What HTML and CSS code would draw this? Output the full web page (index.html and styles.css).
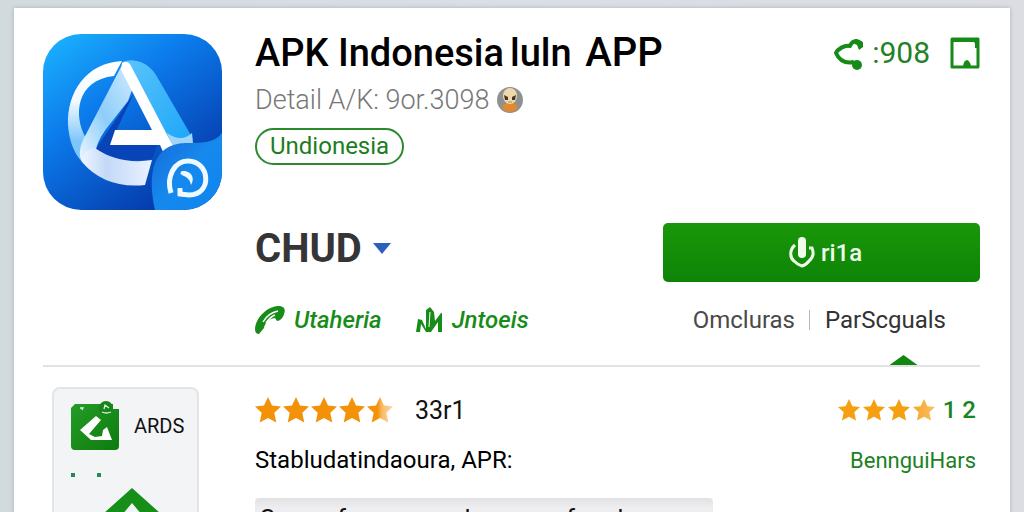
FILE: index.html
```html
<!DOCTYPE html>
<html lang="id">
<head>
<meta charset="utf-8">
<meta name="viewport" content="width=device-width, initial-scale=1">
<title>APK Indonesia</title>
<link rel="stylesheet" href="styles.css">
</head>
<body>
<svg class="defs" width="0" height="0" aria-hidden="true">
  <defs>
    <linearGradient id="fade"><stop offset=".4" stop-color="#f39208"/><stop offset=".6" stop-color="#f9bd6c"/><stop offset="1" stop-color="#fbd7a4"/></linearGradient>
    <linearGradient id="fade2"><stop offset="0" stop-color="#f5a524"/><stop offset="1" stop-color="#f9c069"/></linearGradient>
    <symbol id="star" viewBox="0 0 26 26"><path d="M13 0l4 8.600 9 .9-6.700 6.300 2 9.700L13 21l-8.300 4.500 2-9.700L0 9.500l9-.9z"/></symbol>
  </defs>
</svg>
<main class="page">
  <header class="app">
    <svg class="app-icon" viewBox="0 0 179 176" role="img" aria-label="APK Indonesia">
      <defs>
        <linearGradient id="bg" x1="0" y1="0" x2=".75" y2="1"><stop offset="0" stop-color="#1cb6ff"/><stop offset=".4" stop-color="#0c7cec"/><stop offset="1" stop-color="#0433a4"/></linearGradient>
        <linearGradient id="ring" x1="0" y1="0" x2="0" y2="1"><stop offset="0" stop-color="#fff"/><stop offset=".4" stop-color="#f2f9ff"/><stop offset=".8" stop-color="#7cc6fa"/></linearGradient>
        <linearGradient id="leg" x1="1" y1="0" x2="0" y2="1"><stop offset="0" stop-color="#d3ecff"/><stop offset=".55" stop-color="#8dcefa"/><stop offset="1" stop-color="#eef7ff"/></linearGradient>
        <linearGradient id="side" x1="0" y1="0" x2="1" y2="1"><stop offset="0" stop-color="#5bc5fa"/><stop offset="1" stop-color="#1ba5fa"/></linearGradient>
        <linearGradient id="base"><stop offset="0" stop-color="#eef5ff"/><stop offset=".35" stop-color="#c3d9f8"/><stop offset="1" stop-color="#eaf2ff"/></linearGradient>
        <linearGradient id="corner" x1="0" y1="0" x2="1" y2="1"><stop offset="0" stop-color="#1767d7"/><stop offset=".5" stop-color="#1689ed"/><stop offset="1" stop-color="#0d84f0"/></linearGradient>
        <clipPath id="tile"><rect width="179" height="176" rx="38"/></clipPath>
      </defs>
      <g clip-path="url(#tile)">
        <rect width="179" height="176" fill="url(#bg)"/>
        <path d="M91 59L52 116q22 14 57 9l6-16-48 1z" fill="#0844b8"/>
        <path d="M79 27C43 29 24 58 25 91c1 14 5 27 14 37l4-24C30 82 33 46 71 42z" fill="url(#ring)"/>
        <path d="M79 29c5-5 24-4 34 12l36 62c4 8-18 12-25 1z" fill="url(#side)"/>
        <path d="M124 99q14 10 25 0l1 10q-12 0-20 5z" fill="#9fd5fb"/>
        <path d="M80 29L40 106q-6 13-1 22l14-13q3-12 14-25l18-23 7-19z" fill="url(#leg)"/>
        <path d="M39 128q3-14 13-14 24 17 57 12l-7 25Q62 155 39 128z" fill="url(#base)"/>
        <path d="M79 29q4-3 8 1l44 84-10 6-4-9H67l5-15h37L90 59 78 36z" fill="#fff"/>
        <path d="M112 176c-8-37-2-66 30-67 17 0 30 0 37-10v77z" fill="url(#corner)"/>
        <path d="M128 159c-5-16 3-32 17-32 22 0 25 34 1 34l-9-1v-6" fill="none" stroke="#edf9ff" stroke-width="5"/>
        <path d="M139 137c8-1 14 6 9 14-1-5-3-7-7-9-3-1-5-3-2-5z" fill="#edf9ff"/>
      </g>
    </svg>
    <div class="info">
      <div class="heading">
        <h1>APK Indonesia<span class="word">luln</span> <span class="word-wide">APP</span></h1>
        <div class="tools">
          <button class="tool" type="button">
            <svg width="30" height="34" viewBox="0 0 30 34" aria-hidden="true"><path d="M27 10c0-6-8-7-11 0C10 9 4 13 2 17c3 7 8 11 18 9" fill="none" stroke="#178a18" stroke-width="4" stroke-linejoin="round"/><path d="M17 6l5-3 7 3v5l-4 3-2-5z" fill="#178a18"/><circle cx="23" cy="29" r="5" fill="#178a18"/></svg>
            <span>:908</span>
          </button>
          <button class="tool" type="button" aria-label="Simpan">
            <svg width="30" height="32" viewBox="0 0 30 32" aria-hidden="true"><path d="M2 2h26v28H2z" fill="none" stroke="#178a18" stroke-width="3" stroke-linejoin="round"/><path d="M3 3h22l2 3v5" fill="none" stroke="#178a18" stroke-width="4"/><path d="M13 29q1-6 4-6 3 1 4 6z" fill="#178a18"/></svg>
          </button>
        </div>
      </div>
      <p class="detail">Detail A/K: 9or.3098
        <svg width="26" height="26" viewBox="0 0 26 26" aria-hidden="true"><circle cx="13" cy="13" r="13" fill="#8d9192"/><path d="M5 21q2-6 8-5 6-1 8 5-8 8-16 0z" fill="#df8a30"/><ellipse cx="13" cy="9" rx="7" ry="8" fill="#edd9ac"/><path d="M7 8l4 2v3H8zm12 0l-4 2v3h3z" fill="#42352d"/><path d="M11 15h4" stroke="#b9884f"/></svg>
      </p>
      <a class="chip" href="#indonesia">Undionesia</a>
      <div class="actions">
        <button class="version" type="button"><span>CHUD</span><svg width="18" height="11" viewBox="0 0 18 11" aria-hidden="true"><path d="M0 0h18L9 11z" fill="#2e5fc0"/></svg></button>
        <button class="download" type="button">
          <svg width="26" height="32" viewBox="0 0 26 32" aria-hidden="true"><path d="M6 8C0 13 1 21 5 24q4 4 8 5 4-1 7-5c5-4 5-8 3-13h-3" fill="none" stroke="#effbea" stroke-width="3"/><rect x="9" y="0" width="8" height="21" rx="4" fill="#effbea"/></svg>
          <span>ri1a</span>
        </button>
      </div>
      <div class="links">
        <div class="green-links">
          <a href="#utaheria"><svg width="30" height="28" viewBox="0 0 30 28" aria-hidden="true"><path d="M0 23C1 11 12 1 23 0c6 0 8 3 6 8-1 4-4 7-7 7l-2-3C13 13 10 17 9 22l-5 6q-4 0-4-5z" fill="#178c18"/><path d="M8 16Q13 7 23 5M11 17Q15 11 20 9" fill="none" stroke="#fff" stroke-width="1.500"/></svg><span>Utaheria</span></a>
          <a href="#jntoeis"><svg width="27" height="26" viewBox="0 0 27 26" aria-hidden="true"><path d="M0 25l2-13 4 1 4 9V3l4-3 4 5 1 9 6-8h1v19h-4V15l-7 10h-5l-5-8-1 8z" fill="#178c18"/><path d="M14 5l-1 15" stroke="#fff" stroke-width="1"/></svg><span>Jntoeis</span></a>
        </div>
        <nav class="tabs">
          <a href="#omcluras">Omcluras</a>
          <a class="active" href="#parscguals">ParScguals</a>
        </nav>
      </div>
    </div>
  </header>
  <section class="body">
    <aside class="side">
      <div class="side-head">
        <svg width="48" height="50" viewBox="0 0 48 50" aria-hidden="true"><defs><linearGradient id="g" x1="0" y1="0" x2="1" y2="1"><stop offset="0" stop-color="#269c27"/><stop offset="1" stop-color="#0c7b0e"/></linearGradient></defs><path d="M4 3h38v5h6v37q0 4-4 4H4q-4 0-4-4V7z" fill="url(#g)"/><circle cx="35" cy="7" r="7" fill="#19841b"/><path d="M33 8l1-4 4 3M31 11q4 2 9 0M9 7h3l-1 2" fill="none" stroke="#d9f6dc" stroke-width="1.300"/><path d="M25 15l5 4-12 14 6 3 7-1 1-6 4-3 5 13H20L9 29z" fill="#fff"/></svg>
        <span>ARDS</span>
      </div>
      <div class="dots"><i></i><i></i></div>
      <svg class="arrow" width="76" height="76" viewBox="0 0 76 76" aria-hidden="true"><path d="M38 0l38 34-12 12-26-31-26 31L0 34z" fill="#158f17"/></svg>
    </aside>
    <div class="reviews">
      <div class="row">
        <div class="rating">
          <span class="stars"><svg><use href="#star"/></svg><svg><use href="#star"/></svg><svg><use href="#star"/></svg><svg><use href="#star"/></svg><svg class="half"><use href="#star"/></svg></span>
          <span>33r1</span>
        </div>
        <div class="rating-small">
          <span class="stars-small"><svg><use href="#star"/></svg><svg><use href="#star"/></svg><svg><use href="#star"/></svg><svg class="pale"><use href="#star"/></svg></span>
          <span>1 2</span>
        </div>
      </div>
      <div class="row row-text">
        <p>Stabludatindaoura, APR:</p>
        <a href="#bennguihars">BennguiHars</a>
      </div>
      <div class="note">Conn ufaurmana nl ao rum, fou du</div>
    </div>
  </section>
</main>
</body>
</html>
```
FILE: styles.css
```css
* { box-sizing: border-box; }
html, body { margin: 0; }
body {
  height: 100vh;
  overflow: hidden;
  padding: 8px 14px 0;
  background: linear-gradient(90deg, #d3dade, #dadfe5 50%, #dbdde2);
  font-family: Roboto, "Liberation Sans", sans-serif;
  color: #111;
}
.defs { display: block; width: 0; height: 0; }
h1, p { margin: 0; font-weight: 400; }
a { color: inherit; text-decoration: none; }
button { padding: 0; border: 0; background: none; font: inherit; color: inherit; cursor: pointer; }
svg { display: block; flex: none; }

.page {
  min-height: 100vh;
  padding: 26px 30px 0 29px;
  background: #fff;
  box-shadow: 0 0 4px #a9b1b5;
}
.app {
  display: grid;
  grid-template-columns: 179px 1fr;
  gap: 33px;
  border-bottom: 2px solid #e2e2e2;
}
.app-icon { width: 179px; height: 176px; }
.info { display: flex; flex-direction: column; align-items: stretch; }
.heading { display: flex; justify-content: space-between; align-items: center; height: 38px; }
h1 { font-size: 38px; line-height: 38px; font-weight: 500; color: #000; white-space: nowrap; }
.word { margin-left: 6px; }
.word-wide { margin-left: 4px; font-size: 40px; }
.tools { display: flex; gap: 20px; }
.tool { display: flex; align-items: center; gap: 8px; font-size: 30px; line-height: 34px; color: #238126; }
.detail { display: flex; align-items: center; gap: 8px; margin-top: 14px; font-size: 27px; line-height: 28px; color: #777; font-weight: 300; }
.chip {
  align-self: flex-start;
  margin-top: 14px;
  padding: 0 13px;
  border: 2px solid #2b8a2d;
  border-radius: 19px;
  font-size: 24px;
  line-height: 33px;
  color: #1c7d20;
}
.actions { display: flex; justify-content: space-between; align-items: center; margin-top: 58px; }
.version { display: flex; align-items: center; gap: 11px; margin-bottom: 8px; font-size: 40px; line-height: 40px; font-weight: 700; color: #353537; }
.download {
  display: flex;
  align-items: center;
  justify-content: center;
  gap: 6px;
  width: 317px;
  height: 59px;
  padding-left: 8px;
  border-radius: 5px;
  background: linear-gradient(#199709, #0e8407);
  font-size: 24px;
  font-weight: 500;
  color: #effbea;
}
.links { display: flex; justify-content: space-between; align-items: flex-start; margin-top: 22px; padding-right: 34px; font-size: 24px; line-height: 32px; }
.green-links { display: flex; gap: 34px; font-style: italic; font-weight: 500; color: #178c18; }
.green-links a { display: flex; align-items: center; gap: 9px; }
.tabs { display: flex; color: #4a4a4a; }
.tabs a { display: flex; flex-direction: column; align-items: center; height: 61px; }
.tabs .active { padding-left: 30px; color: #333; background: linear-gradient(#b5b5b5, #b5b5b5) 14px 6px / 1px 20px no-repeat; }
.active::after {
  content: "";
  width: 28px;
  height: 10px;
  margin-top: auto;
  margin-left: 36px;
  background: #118712;
  clip-path: polygon(50% 0, 100% 100%, 0 100%);
}

.body { display: grid; grid-template-columns: 147px 1fr; gap: 56px; padding: 20px 0 0 9px; }
.side { height: 200px; padding: 12px 12px 0 17px; border: 2px solid #e3e4e6; border-radius: 8px; background: #f3f4f5; }
.side-head { display: flex; align-items: center; gap: 15px; font-size: 20px; }
.dots { display: flex; gap: 22px; margin-top: 22px; }
.dots i { width: 4px; height: 4px; background: #2b8758; }
.arrow { margin: 11px 0 0 23px; }
.reviews { min-width: 0; }
.row { display: flex; justify-content: space-between; align-items: center; height: 46px; padding-right: 4px; }
.rating { display: flex; align-items: center; gap: 22px; font-size: 25px; }
.rating-small { display: flex; align-items: center; gap: 8px; font-size: 24px; font-weight: 500; color: #188520; }
.stars { display: flex; gap: 2px; fill: #f39208; }
.stars svg { width: 26px; height: 26px; }
.stars-small { display: flex; gap: 3px; fill: #f5a010; }
.stars-small svg { width: 22px; height: 22px; }
.half { fill: url(#fade); }
.pale { fill: url(#fade2); }
.row-text { height: 54px; font-size: 24px; color: #000; }
.row-text a { font-size: 22px; color: #1b8122; }
.note { width: 458px; max-width: 100%; margin-top: 11px; padding: 6px 4px; border-radius: 4px; background: linear-gradient(#e2e2e4, #eeeef1 10px); font-size: 25px; line-height: 32px; }
```
